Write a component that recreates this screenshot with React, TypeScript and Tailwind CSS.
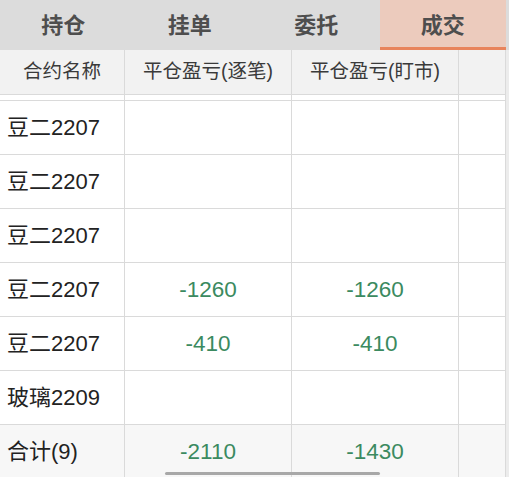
import React from 'react';

const tabs = ['持仓', '挂单', '委托', '成交'];

const rows: { name: string; a: string; b: string }[] = [
  { name: '豆二2207', a: '', b: '' },
  { name: '豆二2207', a: '', b: '' },
  { name: '豆二2207', a: '', b: '' },
  { name: '豆二2207', a: '-1260', b: '-1260' },
  { name: '豆二2207', a: '-410', b: '-410' },
  { name: '玻璃2209', a: '', b: '' },
];

const font = { fontFamily: '"Liberation Sans", "Noto Sans CJK SC", sans-serif' };

const Row: React.FC<{ name: string; a: string; b: string; total?: boolean }> = ({ name, a, b, total }) => (
  <div className={`flex h-[54px] border-b border-[#dadada] ${total ? 'bg-[#f7f7f7]' : 'bg-white'}`}>
    <div className="w-[125px] shrink-0 border-r border-[#dadada] flex items-center pl-[7px] text-[22px] text-[#222]">{name}</div>
    <div className="w-[167px] shrink-0 border-r border-[#dadada] flex items-center justify-center text-[22.5px] text-[#3b8a60]">{a}</div>
    <div className="w-[167px] shrink-0 border-r border-[#dadada] flex items-center justify-center text-[22.5px] text-[#3b8a60]">{b}</div>
    <div className="w-[47px] shrink-0 border-r border-[#dadada]"></div>
  </div>
);

export default function App() {
  return (
    <div className="relative w-[509px] h-[477px] overflow-hidden bg-[#ececec]" style={font}>
      {/* Tabs */}
      <div className="flex h-[50px] bg-[#dcdcdc]">
        {tabs.map((t, i) => (
          <div
            key={t}
            className={`w-[126.5px] flex items-center justify-center text-[22px] font-bold text-[#4e4e4e] ${
              i === 3 ? 'bg-[#eccbbd] border-b-[3px] border-[#e8845c] pt-[3px]' : ''
            }`}
          >
            {t}
          </div>
        ))}
      </div>

      <div className="w-[506px]">
        {/* Header */}
        <div className="flex h-[45px] bg-[#f2f2f2] border-b border-[#dadada] text-[19.5px] text-[#3a3a3a]">
          <div className="w-[125px] shrink-0 border-r border-[#dadada] flex items-center justify-center">合约名称</div>
          <div className="w-[167px] shrink-0 border-r border-[#dadada] flex items-center justify-center">平仓盈亏(逐笔)</div>
          <div className="w-[167px] shrink-0 border-r border-[#dadada] flex items-center justify-center">平仓盈亏(盯市)</div>
          <div className="w-[47px] shrink-0 border-r border-[#dadada]"></div>
        </div>

        {/* scrolled sliver */}
        <div className="flex h-[6px] bg-white border-b border-[#dadada]">
          <div className="w-[125px] shrink-0 border-r border-[#dadada]"></div>
          <div className="w-[167px] shrink-0 border-r border-[#dadada]"></div>
          <div className="w-[167px] shrink-0 border-r border-[#dadada]"></div>
          <div className="w-[47px] shrink-0 border-r border-[#dadada]"></div>
        </div>

        {rows.map((r, i) => (
          <Row key={i} {...r} />
        ))}
        <Row name="合计(9)" a="-2110" b="-1430" total />
      </div>

      {/* horizontal scroll indicator */}
      <div className="absolute left-[165px] top-[472px] w-[215px] h-[3px] rounded-full bg-[#a8a8a8]"></div>
    </div>
  );
}
